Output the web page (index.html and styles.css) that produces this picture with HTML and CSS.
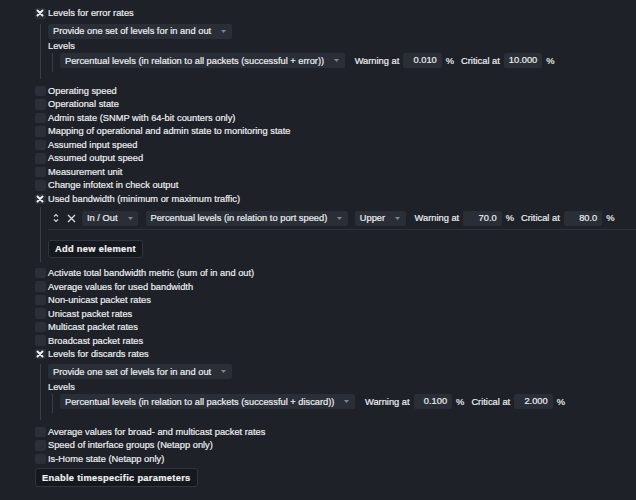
FILE: index.html
```html
<!DOCTYPE html>
<html>
<head>
<meta charset="utf-8">
<title>Interface parameters</title>
<link rel="stylesheet" href="styles.css">
</head>
<body>
<div class="form">
  <div class="row"><span class="cb checked"><svg viewBox="0 0 8 8" width="8" height="8"><path d="M1.5 1.5 L6.5 6.5 M6.5 1.5 L1.5 6.5" /></svg></span><span>Levels for error rates</span></div>
  <div class="nested levels">
    <div class="select"><span>Provide one set of levels for in and out</span><svg class="arr" viewBox="0 0 5 3" width="5" height="3"><path d="M0 0 H5 L2.5 3 Z"/></svg></div>
    <div class="label">Levels</div>
    <div class="inner">
      <div class="fields">
        <div class="select"><span>Percentual levels (in relation to all packets (successful + error))</span><svg class="arr" viewBox="0 0 5 3" width="5" height="3"><path d="M0 0 H5 L2.5 3 Z"/></svg></div>
        <span class="lbl first">Warning at</span><span class="input">0.010</span><span class="pct">%</span>
        <span class="lbl">Critical at</span><span class="input">10.000</span><span class="pct">%</span>
      </div>
    </div>
  </div>

  <div class="row"><span class="cb"></span><span>Operating speed</span></div>
  <div class="row"><span class="cb"></span><span>Operational state</span></div>
  <div class="row"><span class="cb"></span><span>Admin state (SNMP with 64-bit counters only)</span></div>
  <div class="row"><span class="cb"></span><span>Mapping of operational and admin state to monitoring state</span></div>
  <div class="row"><span class="cb"></span><span>Assumed input speed</span></div>
  <div class="row"><span class="cb"></span><span>Assumed output speed</span></div>
  <div class="row"><span class="cb"></span><span>Measurement unit</span></div>
  <div class="row"><span class="cb"></span><span>Change infotext in check output</span></div>
  <div class="row"><span class="cb checked"><svg viewBox="0 0 8 8" width="8" height="8"><path d="M1.5 1.5 L6.5 6.5 M6.5 1.5 L1.5 6.5" /></svg></span><span>Used bandwidth (minimum or maximum traffic)</span></div>
  <div class="nested bandwidth">
    <div class="listrow">
      <svg class="updown" viewBox="0 0 6 12" width="6" height="12"><path d="M1 4.5 L3 2.5 L5 4.5 M1 7.5 L3 9.5 L5 7.5"/></svg>
      <svg class="del" viewBox="0 0 9 9" width="9" height="9"><path d="M1 1 L8 8 M8 1 L1 8"/></svg>
      <div class="select inout"><span>In / Out</span><svg class="arr" viewBox="0 0 5 3" width="5" height="3"><path d="M0 0 H5 L2.5 3 Z"/></svg></div>
      <div class="select pcs"><span>Percentual levels (in relation to port speed)</span><svg class="arr" viewBox="0 0 5 3" width="5" height="3"><path d="M0 0 H5 L2.5 3 Z"/></svg></div>
      <div class="select upper"><span>Upper</span><svg class="arr" viewBox="0 0 5 3" width="5" height="3"><path d="M0 0 H5 L2.5 3 Z"/></svg></div>
      <span class="lbl first2">Warning at</span><span class="input">70.0</span><span class="pct">%</span>
      <span class="lbl">Critical at</span><span class="input">80.0</span><span class="pct">%</span>
    </div>
    <button class="btn add">Add new element</button>
  </div>

  <div class="row"><span class="cb"></span><span>Activate total bandwidth metric (sum of in and out)</span></div>
  <div class="row"><span class="cb"></span><span>Average values for used bandwidth</span></div>
  <div class="row"><span class="cb"></span><span>Non-unicast packet rates</span></div>
  <div class="row"><span class="cb"></span><span>Unicast packet rates</span></div>
  <div class="row"><span class="cb"></span><span>Multicast packet rates</span></div>
  <div class="row"><span class="cb"></span><span>Broadcast packet rates</span></div>
  <div class="row"><span class="cb checked"><svg viewBox="0 0 8 8" width="8" height="8"><path d="M1.5 1.5 L6.5 6.5 M6.5 1.5 L1.5 6.5" /></svg></span><span>Levels for discards rates</span></div>
  <div class="nested levels">
    <div class="select"><span>Provide one set of levels for in and out</span><svg class="arr" viewBox="0 0 5 3" width="5" height="3"><path d="M0 0 H5 L2.5 3 Z"/></svg></div>
    <div class="label">Levels</div>
    <div class="inner">
      <div class="fields">
        <div class="select"><span>Percentual levels (in relation to all packets (successful + discard))</span><svg class="arr" viewBox="0 0 5 3" width="5" height="3"><path d="M0 0 H5 L2.5 3 Z"/></svg></div>
        <span class="lbl first">Warning at</span><span class="input">0.100</span><span class="pct">%</span>
        <span class="lbl">Critical at</span><span class="input">2.000</span><span class="pct">%</span>
      </div>
    </div>
  </div>

  <div class="row"><span class="cb"></span><span>Average values for broad- and multicast packet rates</span></div>
  <div class="row"><span class="cb"></span><span>Speed of interface groups (Netapp only)</span></div>
  <div class="row"><span class="cb"></span><span>Is-Home state (Netapp only)</span></div>
  <button class="btn timespec">Enable timespecific parameters</button>
</div>
</body>
</html>
```

FILE: styles.css
```css
html, body {
  margin: 0;
  padding: 0;
  background: #1e2128;
}
body {
  color: #eceef0;
  font-family: "Liberation Sans", Arial, Helvetica, sans-serif;
  font-size: 9.3px;
  -webkit-text-stroke: 0.2px #eceef0;
  height: 500px;
  overflow: hidden;
}
.form {
  padding: 6.5px 0 0 35px;
}
.row {
  display: flex;
  align-items: center;
  height: 13.5px;
  white-space: nowrap;
}
.cb {
  flex: none;
  width: 10.5px;
  height: 10.5px;
  background: #2b2f38;
  border-radius: 2px;
  margin-right: 2.5px;
  display: flex;
  align-items: center;
  justify-content: center;
}
.cb svg path {
  stroke: #f2f2f2;
  stroke-width: 1.9;
  stroke-linecap: round;
  fill: none;
}
.nested {
  margin-left: 5px;
  border-left: 1px solid #393d45;
  padding-left: 7px;
}
.levels {
  margin-top: 3.5px;
  margin-bottom: 5.25px;
  padding-bottom: 7px;
}
.select {
  display: inline-flex;
  align-items: center;
  height: 15px;
  background: #2a2e37;
  border-radius: 2px;
  padding: 0 5.5px 0 5px;
  gap: 10px;
  white-space: nowrap;
  box-sizing: border-box;
}
.arr path {
  fill: #80858e;
}
.label {
  height: 12px;
  line-height: 12px;
  margin-top: 1.7px;
}
.inner {
  margin: 1.3px 0 0 4px;
  border-left: 1px solid #393d45;
  padding: 0 0 3.5px 7px;
}
.fields, .listrow {
  display: flex;
  align-items: center;
  white-space: nowrap;
}
.lbl {
  margin-left: 7px;
  margin-right: 4px;
}
.lbl.first {
  margin-left: 10px;
}
.lbl.first2 {
  margin-left: 9px;
}
.input {
  display: inline-block;
  width: 38.5px;
  height: 15px;
  line-height: 15px;
  background: #2a2e37;
  border-radius: 2px;
  text-align: right;
  padding-right: 5px;
  box-sizing: border-box;
}
.pct {
  margin-left: 4px;
}
.bandwidth {
  margin-top: 1.5px;
  padding-top: 3.5px;
  padding-bottom: 4px;
  margin-bottom: 4.25px;
}
.listrow {
  padding-bottom: 3px;
  border-bottom: 1px solid #2d3139;
}
.updown {
  margin-left: 5px;
}
.updown path, .del path {
  stroke: #d4d6da;
  stroke-width: 1.1;
  fill: none;
}
.del {
  margin-left: 8px;
}
.del path {
  stroke-width: 1.4;
}
.inout {
  margin-left: 6px;
}
.pcs {
  margin-left: 7.5px;
}
.upper {
  margin-left: 7px;
}
.btn {
  display: block;
  font-family: inherit;
  font-size: 9.3px;
  font-weight: bold;
  letter-spacing: 0.3px;
  color: #f0f1f3;
  -webkit-text-stroke: 0.2px #f0f1f3;
  background: #15181c;
  border: 1px solid #30343c;
  border-radius: 3px;
  padding: 0 6px;
  margin: 0;
  white-space: nowrap;
}
.add {
  margin-top: 10.5px;
  height: 18px;
}
.timespec {
  margin-top: 2.5px;
  height: 19px;
}
```
